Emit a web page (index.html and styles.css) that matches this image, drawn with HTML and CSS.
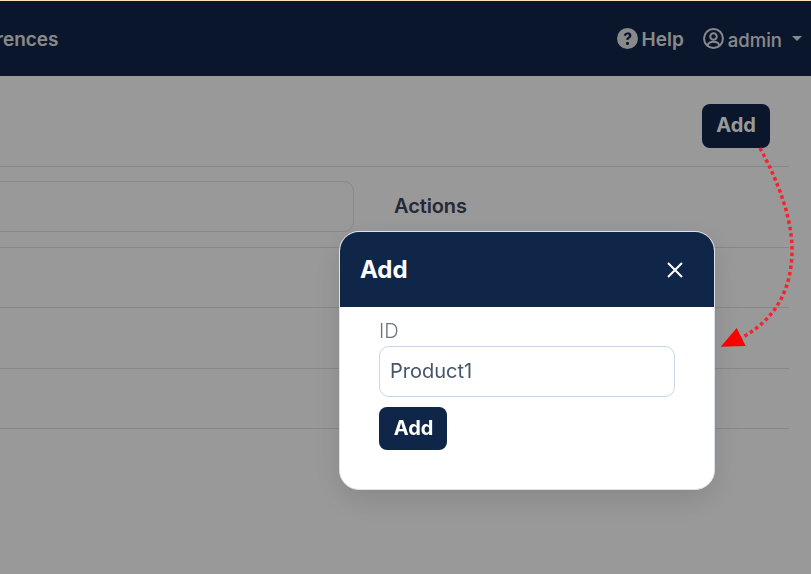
FILE: index.html
```html
<!DOCTYPE html>
<html lang="en">
<head>
<meta charset="utf-8">
<title>Add</title>
<link rel="stylesheet" href="styles.css">
</head>
<body>
<div class="page">
  <header class="navbar">
    <a class="nav-link nav-prefs">Preferences</a>
    <div class="nav-right">
      <a class="nav-link nav-item">
        <svg class="nav-icon" viewBox="0 0 20 20"><path fill="currentColor" fill-rule="evenodd" d="M10 0a10 10 0 1 1 0 20a10 10 0 0 1 0-20zM10 13.2a1.5 1.5 0 1 0 0 3a1.5 1.5 0 0 0 0-3zM10.2 4.2c-2 0-3.4 1-3.7 2.9l2 .5c.2-1 .8-1.5 1.6-1.5c.8 0 1.4.4 1.4 1.1c0 .6-.4 1-1.1 1.4c-1 .6-1.5 1.2-1.5 2.3v.6h2v-.4c0-.5.3-.8 1-1.2c1-.6 1.8-1.4 1.8-2.8c0-1.9-1.5-3-3.5-3z"/></svg>
        <span>Help</span>
      </a>
      <a class="nav-link nav-item nav-user">
        <svg class="nav-icon" viewBox="0 0 20 20"><g fill="none" stroke="currentColor" stroke-width="1.9"><circle cx="10" cy="10" r="9"/><circle cx="10" cy="8" r="3.1"/><path d="M4.4 16.6c.7-2.2 2.6-3.4 5.6-3.4s4.900 1.200 5.600 3.400"/></g></svg>
        <span>admin</span>
        <i class="caret"></i>
      </a>
    </div>
  </header>
  <main class="content">
    <div class="toolbar"><button class="btn btn-add" type="button">Add</button></div>
    <div class="table">
      <div class="row row-head">
        <div class="cell-filter"><div class="filter"></div></div>
        <div class="cell-actions">Actions</div>
      </div>
      <div class="row row-a"></div>
      <div class="row row-b"></div>
      <div class="row row-c"></div>
    </div>
  </main>
</div>
<div class="overlay"></div>
<svg class="arrow" viewBox="0 0 811 574" aria-hidden="true">
  <path class="arrow-line" d="M760 148C780 185 792 220 792 250C792 290 775 320 741 338"/>
  <polygon class="arrow-head" points="720.700,346.700 736.700,328 745.700,346"/>
</svg>
<section class="modal">
  <div class="modal-head">
    <h2 class="modal-title">Add</h2>
    <svg class="close" viewBox="0 0 16 16"><path d="M1 1L15 15M15 1L1 15"/></svg>
  </div>
  <div class="modal-body">
    <label class="label">ID</label>
    <div class="input">Product1</div>
    <button class="btn btn-submit" type="button">Add</button>
  </div>
</section>
</body>
</html>
```
FILE: styles.css
```css
* { box-sizing: border-box; }
html, body { margin: 0; height: 100%; overflow: hidden; }
body { font-family: Inter, "Noto Sans", sans-serif; background: #fff; color: #3c445c; }

.page { width: 811px; height: 574px; overflow: hidden; border-top: 1px solid #ffe3b8; }

.navbar {
  height: 75px;
  background: #102649;
  display: flex;
  align-items: center;
  justify-content: space-between;
}
.nav-link { color: #e4e4e8; font-size: 19px; font-weight: 600; line-height: 24px; white-space: nowrap; padding-top: 2px; }
.nav-prefs { margin-left: -53px; }
.nav-right { display: flex; align-items: center; gap: 19px; padding-right: 9px; }
.nav-item { display: flex; align-items: center; gap: 4px; }
.nav-icon { width: 21px; height: 21px; display: block; margin-top: -3px; }
.nav-user { gap: 4px; font-size: 18.500px; font-weight: 500; }
.caret {
  width: 0; height: 0;
  margin-left: 6px;
  margin-top: -2px;
  border-left: 5px solid transparent;
  border-right: 5px solid transparent;
  border-top: 5px solid #e4e4e8;
}

.content { padding-right: 22px; }
.toolbar { display: flex; justify-content: flex-end; padding: 28px 19px 18px 0; }
.btn {
  border: 0;
  font-family: Inter, "Noto Sans", sans-serif;
  font-size: 20px;
  font-weight: 700;
  color: #fff;
  background: #102649;
  border-radius: 8px;
  width: 68px;
  padding: 0 0 2px;
  display: block;
}
.btn-add { height: 44px; }
.btn-submit { height: 43px; padding-left: 1px; }

.table { border-top: 1px solid #dee2e6; }
.row { border-bottom: 1px solid #dee2e6; display: flex; }
.row-head { height: 81px; align-items: center; }
.row-a { height: 60px; }
.row-b { height: 61px; }
.row-c { height: 61px; margin-top: -1px; }
.cell-filter { width: 354px; flex: none; }
.filter {
  margin-left: -30px;
  height: 51px;
  border: 1px solid #e2e3f0;
  border-radius: 10px;
  background: #fff;
  margin-top: -1px;
}
.cell-actions { margin-left: 40px; font-size: 20px; font-weight: 600; line-height: 24px; margin-top: -2px; letter-spacing: -.1px; }

.overlay { position: fixed; inset: 1px 0 0 0; background: rgba(0, 0, 0, .4); }
.arrow { position: fixed; left: 0; top: 0; width: 811px; height: 574px; pointer-events: none; }
.arrow-line { fill: none; stroke: #f5232d; stroke-width: 3.500; stroke-dasharray: 3.500 3; }
.arrow-head { fill: #ff0000; }

.modal {
  position: fixed;
  left: 339px;
  top: 231px;
  width: 376px;
  height: 259px;
  background: #fff;
  border: 1px solid #dde1ea;
  border-radius: 20px;
  overflow: hidden;
  box-shadow: 0 10px 30px rgba(0, 0, 0, .12);
}
.modal-head {
  height: 75px;
  background: #102649;
  display: flex;
  align-items: center;
  justify-content: space-between;
  padding: 0 31px 0 20px;
}
.modal-title { margin: 0; font-size: 24px; font-weight: 700; color: #fff; line-height: 30px; }
.close { width: 16px; height: 16px; display: block; stroke: #fff; stroke-width: 2; fill: none; }
.modal-body { padding: 12px 39px 0; }
.label { display: block; font-size: 20px; font-weight: 300; line-height: 24px; color: #6f747c; }
.input {
  margin-top: 3px;
  height: 51px;
  border: 1px solid #c9d5e8;
  border-radius: 10px;
  font-size: 20px;
  line-height: 48px;
  color: #475569;
  padding-left: 10px;
}
.btn-submit { margin-top: 10px; }
```
